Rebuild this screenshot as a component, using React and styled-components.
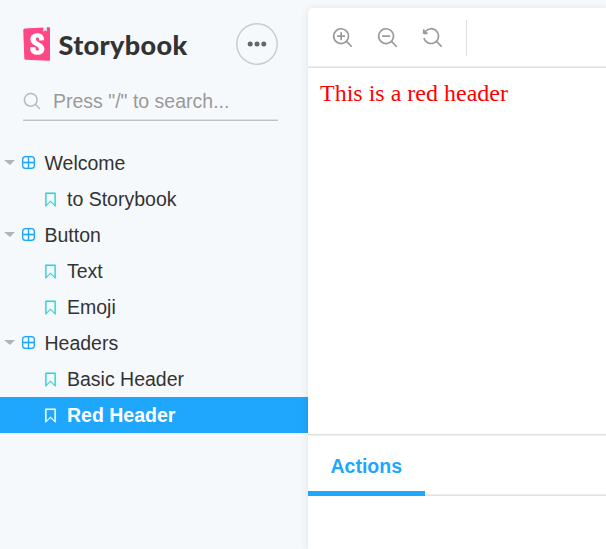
import React, { useState } from 'react';
import styled, { createGlobalStyle } from 'styled-components';

const GlobalStyle = createGlobalStyle`
    * {
        box-sizing: border-box;
    }
    body {
        margin: 0;
        overflow: hidden;
        background: #f6f9fc;
        font-family: "Liberation Sans", Arial, sans-serif;
        font-size: 19.5px;
        color: #333;
    }
`;

const Layout = styled.div`
    display: flex;
    height: 549px;
`;

const Sidebar = styled.nav`
    flex: 0 0 308px;
    min-width: 0;
    display: flex;
    flex-direction: column;
`;

const Brand = styled.div`
    display: flex;
    align-items: center;
    height: 42px;
    margin: 23px 30px 0 23px;
    svg {
        width: 27px;
        height: 34px;
    }
`;

const BrandName = styled.span`
    flex: 1;
    margin-left: 8.5px;
    padding-top: 1px;
    font-family: Lato, sans-serif;
    font-size: 27px;
    font-weight: 900;
    line-height: 42px;
    letter-spacing: 0.35px;
`;

const MenuButton = styled.button`
    display: flex;
    align-items: center;
    justify-content: center;
    width: 42px;
    height: 42px;
    padding: 0;
    border: none;
    border-radius: 50%;
    background: transparent;
    box-shadow: inset 0 0 0 1.5px #c9cdd0;
    color: #666;
    svg {
        width: 20px;
        height: 20px;
    }
`;

const Search = styled.label`
    display: flex;
    align-items: center;
    height: 39px;
    margin: 17px 30px 24px 23px;
    border-bottom: 1px solid #c0c3c6;
    box-shadow: inset 0 -1px 0 #dfe2e5;
    color: #b7babd;
    svg {
        width: 18px;
        height: 18px;
    }
    input {
        flex: 1;
        width: 100%;
        min-width: 0;
        margin-left: 12px;
        padding: 0;
        border: none;
        outline: none;
        background: transparent;
        font: inherit;
        color: #333;
        &::placeholder {
            color: #999;
            opacity: 1;
        }
    }
`;

const Row = styled.div`
    display: flex;
    align-items: center;
    height: 36px;
    padding-left: ${({ $story }) => ($story ? '43px' : '3.5px')};
    background: ${({ $selected }) => ($selected ? '#1ea7fd' : 'transparent')};
    color: ${({ $selected }) => ($selected ? '#fff' : '#333')};
    font-weight: ${({ $selected }) => ($selected ? 700 : 400)};
    cursor: pointer;
    svg {
        width: 15px;
        height: 15px;
        margin-top: ${({ $story }) => ($story ? '0' : '-1px')};
        margin-right: 9px;
        stroke: currentColor;
        stroke-width: 8;
        color: ${({ $story, $selected }) => ($selected ? '#fff' : $story ? '#37d5d3' : '#1ea7fd')};
    }
`;

const Caret = styled.span`
    margin: -2px 6px 0 0;
    border-top: 5.5px solid #b1b3b5;
    border-left: 6px solid transparent;
    border-right: 5px solid transparent;
`;

const Main = styled.main`
    flex: 1;
    display: flex;
    flex-direction: column;
    margin-top: 8px;
    border-top-left-radius: 5px;
    background: #fff;
    box-shadow: 0 1px 8px rgba(0, 0, 0, 0.1);
    overflow: hidden;
`;

const Toolbar = styled.div`
    display: flex;
    align-items: center;
    height: 60px;
    padding-left: 23.5px;
    border-bottom: 1px solid #e2e2e2;
    box-shadow: inset 0 -1px 0 #ededed;
`;

const Tool = styled.button`
    display: flex;
    width: 21px;
    height: 21px;
    margin-right: 24px;
    padding: 0;
    border: none;
    background: none;
    color: #999;
    svg {
        width: 21px;
        height: 21px;
    }
`;

const Separator = styled.span`
    width: 1px;
    height: 36px;
    margin-top: 1px;
    margin-left: -0.5px;
    background: #dfdfdf;
`;

const Preview = styled.div`
    height: 366px;
    padding: 12px;
    font-family: "Liberation Serif", serif;
    font-size: 24px;
    line-height: 27px;
`;

const Header = styled.div`
    color: ${({ $color }) => $color};
`;

const Tabs = styled.div`
    display: flex;
    height: 62px;
    border-top: 1px solid #dfdfdf;
    box-shadow: inset 0 1px 0 #eee, inset 0 -1px 0 #e2e2e2, inset 0 -2px 0 #eee;
`;

const Tab = styled.button`
    height: 61px;
    padding: 7px 22.5px 0;
    border: none;
    border-bottom: 5px solid #1ea7fd;
    background: transparent;
    font: inherit;
    font-weight: 700;
    color: #1ea7fd;
`;

const icons = {
    search: 'M218 670a318 318 0 0 1 0-451 316 316 0 0 1 451 0 318 318 0 0 1 0 451 316 316 0 0 1-451 0m750 240L756 698a402 402 0 1 0-59 60l212 212c16 16 42 16 59 0 16-16 16-43 0-60',
    zoom: 'M220 670a316 316 0 0 1 0-450 316 316 0 0 1 450 0 316 316 0 0 1 0 450 316 316 0 0 1-450 0zm749 240L757 698a402 402 0 1 0-59 60l212 211a42 42 0 0 0 59 0c16-16 16-42 0-59zM487 604a42 42 0 0 1-84 0V487H286a42 42 0 1 1 0-84h117V286a42 42 0 1 1 84 0v117h117a42 42 0 0 1 0 84H487v117z',
    zoomout: 'M757 698a402 402 0 1 0-59 60l212 211a42 42 0 0 0 59 0c16-16 16-42 0-59L757 698zM126 445a316 316 0 0 1 319-319 316 316 0 0 1 318 319 316 316 0 0 1-318 318 316 316 0 0 1-319-318zm160 42a42 42 0 1 1 0-84h318a42 42 0 0 1 0 84H286z',
    zoomreset: 'M148 560a318 318 0 0 0 522 110 316 316 0 0 0 0-450 316 316 0 0 0-450 0c-11 11-21 22-30 34v4h47c25 0 46 21 46 46s-21 45-46 45H90c-13 0-25-6-33-14-9-9-14-20-14-33V156c0-25 20-45 45-45s45 20 45 45v32l1 1a401 401 0 0 1 623 509l212 212a42 42 0 0 1-59 59L698 757A401 401 0 0 1 65 570a42 42 0 0 1 83-10z',
    ellipsis: 'M164 384a128 128 0 1 1 0 256 128 128 0 0 1 0-256zm348 0a128 128 0 1 1 0 256 128 128 0 0 1 0-256zm348 0a128 128 0 1 1 0 256 128 128 0 0 1 0-256z',
    component: 'M155 469h314V155H310c-86 0-155 69-155 155v159zm0 86v159c0 86 69 155 155 155h159V555H155zm714-86V310c0-86-69-155-155-155H555v314h314zm0 86H555v314h159c86 0 155-69 155-155V555zM310 70h404a240 240 0 0 1 240 240v404a240 240 0 0 1-240 240H310A240 240 0 0 1 70 714V310A240 240 0 0 1 310 70z',
    bookmark: 'M190 40h644c24 0 43 19 43 43v870c0 36-44 54-70 28L512 686 217 981c-26 26-70 8-70-28V83c0-24 19-43 43-43zm53 95v710l236-236c18-18 48-18 66 0l236 236V135H243z',
};

const Icon = ({ name }) => (
    <svg viewBox="0 0 1024 1024" fill="currentColor">
        <path fillRule="evenodd" d={icons[name]} />
    </svg>
);

const Logo = () => (
    <svg viewBox="2.2 0 19.2 24" fill="none">
        <path fill="#fff" d="M5 3h14v18H5z" />
        <path
            fill="#ff4785"
            d="M16.71.243l-.12 2.71a.18.18 0 00.29.15l1.06-.8.9.7a.18.18 0 00.28-.14l-.1-2.76 1.33-.1a1.2 1.2 0 011.279 1.2v21.596a1.2 1.2 0 01-1.26 1.2l-16.096-.72a1.2 1.2 0 01-1.15-1.16l-.75-19.797a1.2 1.2 0 011.13-1.27L16.7.222zM13.64 9.3c0 .47 3.16.24 3.59-.08 0-3.2-1.72-4.89-4.859-4.89-3.15 0-4.899 1.72-4.899 4.29 0 4.45 5.999 4.53 5.999 6.959 0 .7-.32 1.1-1.05 1.1-.96 0-1.35-.49-1.3-2.16 0-.36-3.649-.48-3.769 0-.27 4.03 2.23 5.2 5.099 5.2 2.79 0 4.969-1.49 4.969-4.18 0-4.77-6.099-4.64-6.099-6.999 0-.97.72-1.1 1.13-1.1.45 0 1.25.07 1.19 1.87z"
        />
    </svg>
);

const kinds = [
    { name: 'Welcome', stories: ['to Storybook'] },
    { name: 'Button', stories: ['Text', 'Emoji'] },
    { name: 'Headers', stories: ['Basic Header', 'Red Header'] },
];

const App = () => {
    const [selected, setSelected] = useState('Red Header');

    return (
        <Layout>
            <GlobalStyle />
            <Sidebar>
                <Brand>
                    <Logo />
                    <BrandName>Storybook</BrandName>
                    <MenuButton><Icon name="ellipsis" /></MenuButton>
                </Brand>
                <Search>
                    <Icon name="search" />
                    <input type="text" placeholder={'Press "/" to search...'} />
                </Search>
                {kinds.map((kind) => (
                    <div key={kind.name}>
                        <Row>
                            <Caret />
                            <Icon name="component" />
                            {kind.name}
                        </Row>
                        {kind.stories.map((story) => (
                            <Row key={story} $story $selected={story === selected} onClick={() => setSelected(story)}>
                                <Icon name="bookmark" />
                                {story}
                            </Row>
                        ))}
                    </div>
                ))}
            </Sidebar>
            <Main>
                <Toolbar>
                    <Tool><Icon name="zoom" /></Tool>
                    <Tool><Icon name="zoomout" /></Tool>
                    <Tool><Icon name="zoomreset" /></Tool>
                    <Separator />
                </Toolbar>
                <Preview>
                    <Header $color="red">This is a red header</Header>
                </Preview>
                <Tabs>
                    <Tab>Actions</Tab>
                </Tabs>
            </Main>
        </Layout>
    );
};

export default App;
